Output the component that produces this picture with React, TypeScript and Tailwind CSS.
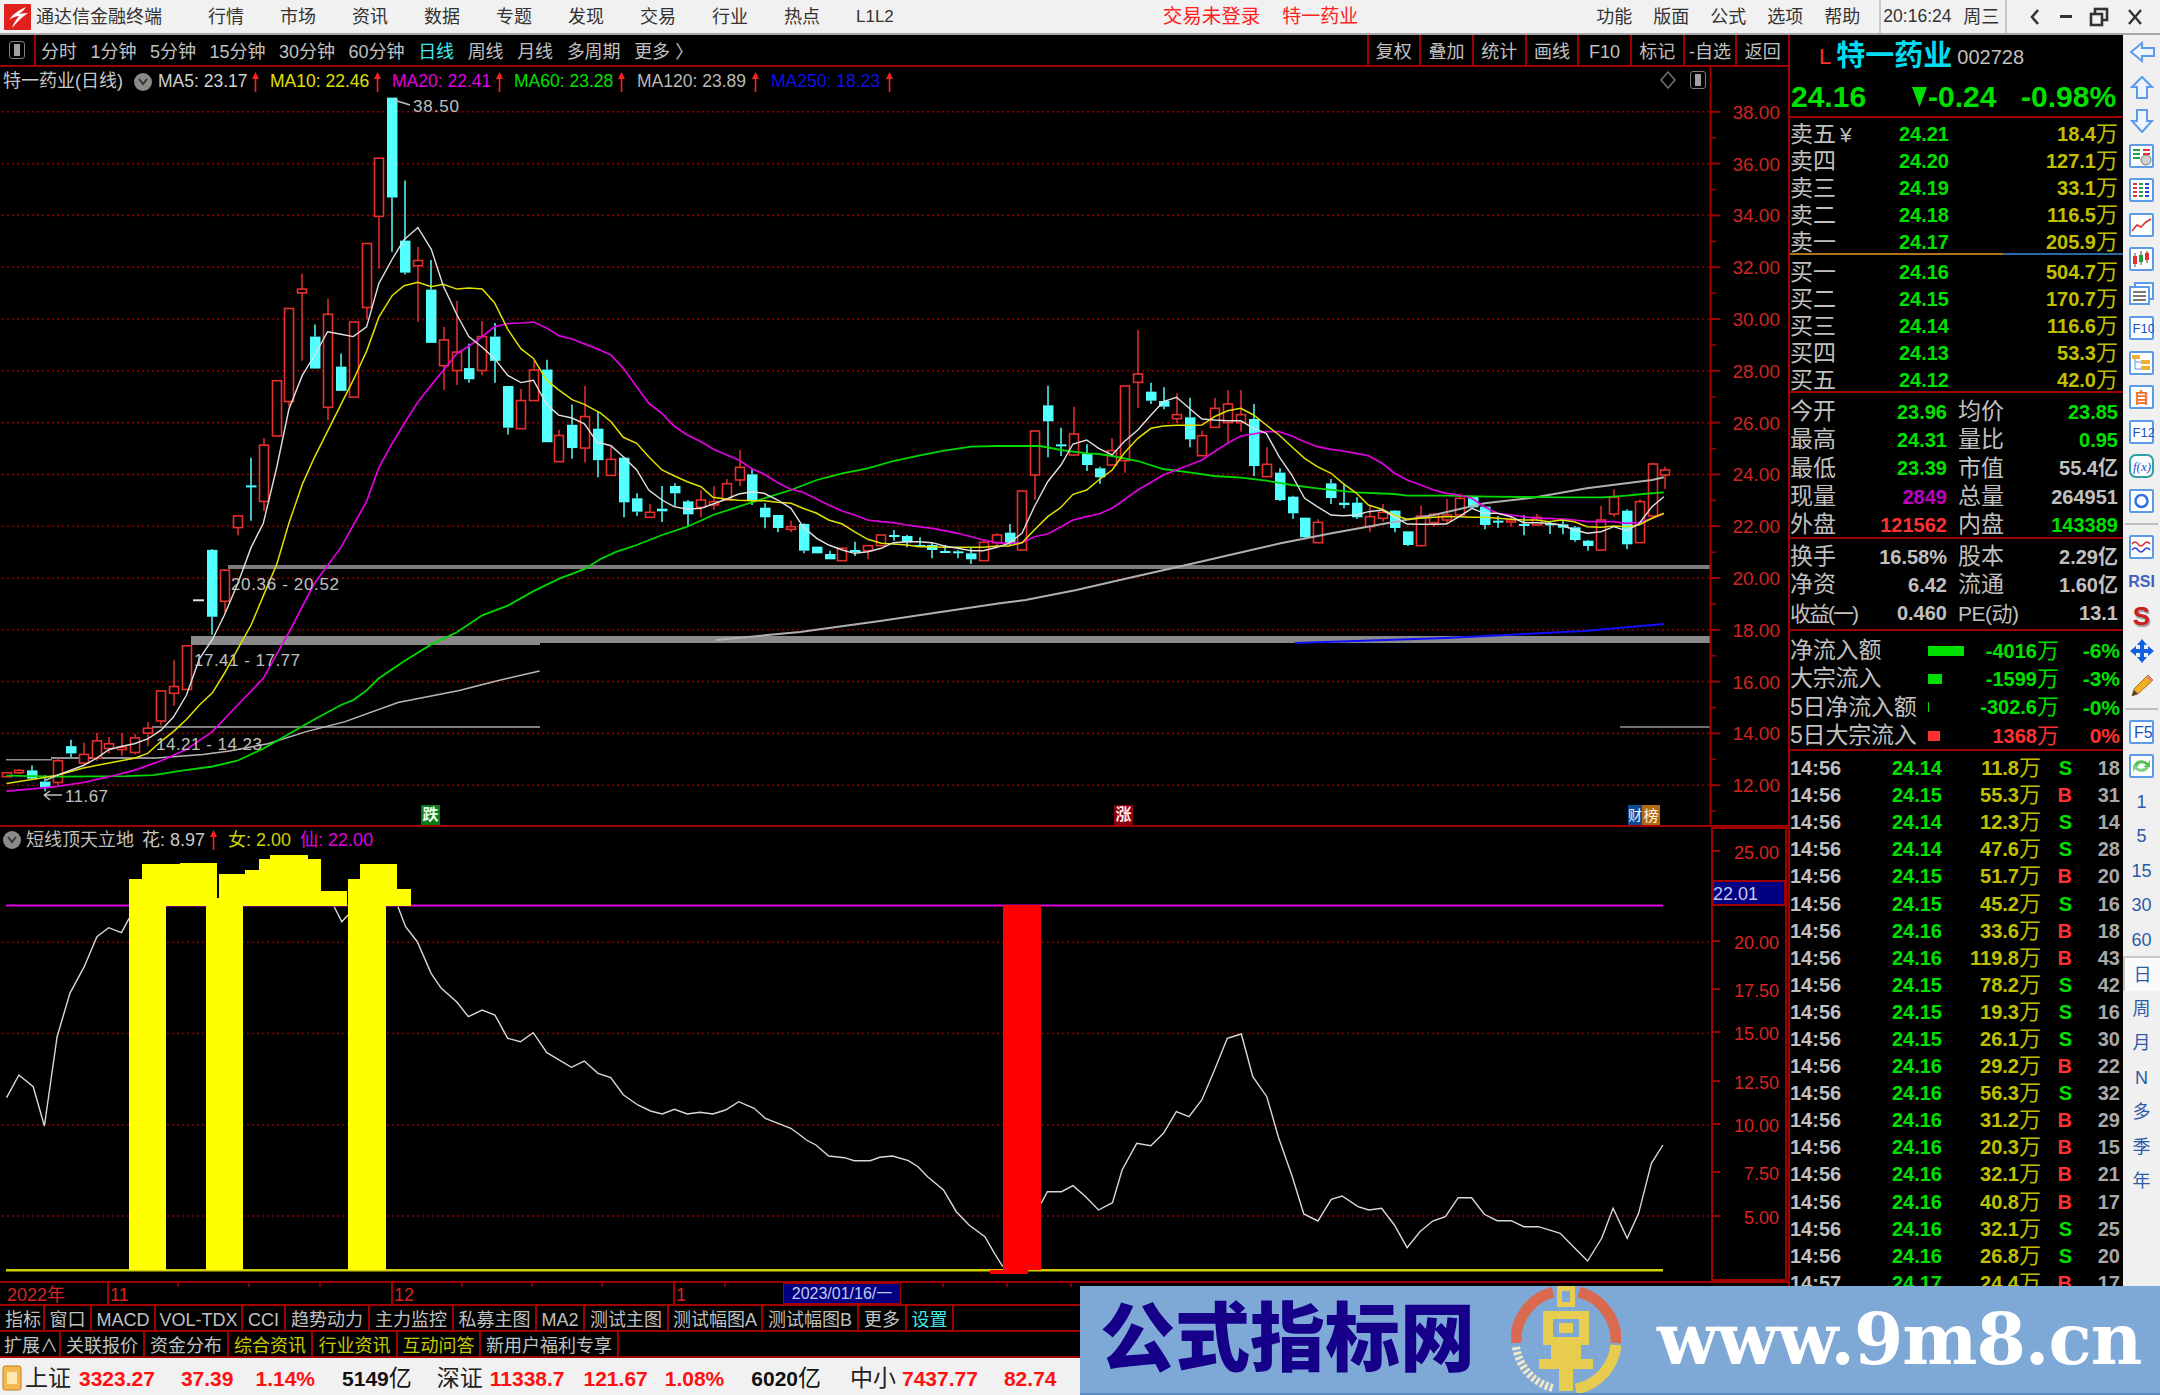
import React from "react";

const z7 = (a: number[]) => { const r: number[][] = []; for (let i = 0; i < a.length; i += 2) r.push([a[i] / 2.613, 70 + a[i + 1] * 0.4847]); return r; };
const z8 = (a: number[]) => { const r: number[][] = []; for (let i = 0; i < a.length; i += 2) r.push([600 + a[i] / 3, 300 + a[i + 1] / 3]); return r; };
const z9 = (a: number[]) => { const r: number[][] = []; for (let i = 0; i < a.length; i += 2) r.push([1000 + a[i] / 1.96, 300 + a[i + 1] / 3]); return r; };
const z10 = (a: number[]) => { const r: number[][] = []; for (let i = 0; i < a.length; i += 2) r.push([a[i] / 1.96, 820 + a[i + 1] / 3]); return r; };
const z11 = (a: number[]) => { const r: number[][] = []; for (let i = 0; i < a.length; i += 2) r.push([800 + a[i] / 1.568, 820 + a[i + 1] / 3]); return r; };
const P = (r: number[][]) => r.map((p) => p[0].toFixed(1) + "," + p[1].toFixed(1)).join(" ");

// r = red (hollow), c = cyan (solid): [wickTop, bodyTop, bodyBottom, wickBottom]
const candA: [string, number, number, number, number][] = [
  ["r",1448,1450,1458,1458],["r",1442,1445,1450,1452],["c",1435,1445,1462,1465],["c",1455,1468,1480,1488],["r",1420,1425,1470,1478],
  ["c",1382,1395,1410,1418],["r",1388,1412,1430,1435],["r",1368,1384,1420,1425],["r",1376,1390,1400,1410],["r",1368,1397,1402,1415],
  ["r",1370,1378,1408,1412],["r",1345,1358,1368,1395],["r",1281,1281,1343,1352],["r",1218,1272,1286,1312],["r",1188,1188,1278,1278],
  ["w",1092,1092,1093,1093],["c",988,990,1128,1165],["r",1030,1032,1096,1118],["r",918,920,944,960],["c",800,857,858,930],
  ["r",760,774,890,910],["r",640,641,755,755],["r",491,492,684,694],["r",420,452,460,600],["c",525,550,616,616],
  ["r",472,504,696,722],["c",585,612,662,662],["r",520,520,675,675],["r",358,358,490,515],["r",182,182,302,410],
  ["c",57,57,263,375],["c",228,352,418,422],["r",365,393,404,520],["c",392,453,563,563],["r",530,557,610,660],
  ["r",476,582,620,650],["c",565,615,638,645],["r",518,550,620,630],["c",522,550,600,645],["c",652,652,738,752],
  ["r",658,682,740,740],["r",600,619,682,682],["c",598,618,768,768],["r",742,754,808,808],["c",690,732,780,802],
  ["r",652,715,780,810],["c",705,740,805,840],
];
const candB: [string, number, number, number, number][] = [
  ["r",440,478,526,526],["c",470,473,607,652],["c",580,595,635,648],["r",612,637,652,652],["c",558,626,634,666],
  ["c",550,558,580,618],["c",600,604,643,680],["r",570,600,622,652],["r",558,605,615,630],["r",537,551,600,603],
  ["r",450,502,540,558],["c",508,523,600,615],["c",610,623,652,685],["c",645,645,684,697],["r",662,680,688,697],
  ["c",670,672,752,760],["c",740,740,760,760],["c",752,762,778,778],["r",742,745,782,782],["c",725,750,752,768],
  ["r",735,737,752,778],["r",705,705,737,737],["c",690,705,707,722],["c",705,708,727,742],["c",712,735,738,740],
  ["c",728,735,750,775],["c",735,753,755,757],["c",750,754,756,775],["c",742,760,778,792],["r",720,727,782,782],
  ["r",700,705,728,745],["c",672,698,730,735],["r",573,573,750,750],["r",393,393,525,600],["c",257,316,364,472],
  ["c",383,433,436,468],["r",320,402,465,467],["c",433,462,495,513],["c",500,505,532,552],
  ["r",415,452,495,495],["r",258,258,482,518],["r",90,222,247,325],["c",248,275,302,312],["c",262,303,320,328],
  ["r",280,344,356,370],["c",293,352,418,442],["r",392,407,467,467],["r",293,325,382,382],["r",270,312,368,428],
  ["r",270,344,368,395],["c",312,357,498,528],["r",442,493,530,530],["c",505,518,600,603],["c",587,590,640,657],
  ["c",653,653,712,718],["r",658,667,728,728],["c",537,550,594,612],["c",555,608,615,625],["c",592,608,652,657],
  ["r",615,650,680,697],["r",612,637,655,665],["c",630,632,684,697],["c",694,694,735,738],["r",617,648,737,737],
  ["r",640,643,668,680],["r",598,645,660,672],["r",582,595,645,650],["c",590,590,622,625],["c",620,620,675,688],
  ["c",648,662,665,683],["r",650,660,665,680],["c",645,672,675,706],["r",642,652,675,677],["c",665,670,675,702],
  ["c",660,673,683,703],["c",678,682,720,725],["c",720,722,738,752],["r",618,660,750,752],["r",568,592,642,650],
  ["c",628,632,733,748],["r",598,605,728,728],["r",488,492,648,655],["r",500,510,525,567],
];
const candles = [
  ...candA.map((c) => [c[0], 70 + c[1] * 0.4847, 70 + c[2] * 0.4847, 70 + c[3] * 0.4847, 70 + c[4] * 0.4847] as [string, number, number, number, number]),
  ...candB.map((c) => [c[0], 300 + c[1] / 3, 300 + c[2] / 3, 300 + c[3] / 3, 300 + c[4] / 3] as [string, number, number, number, number]),
];

const ma5 = [
  ...z7([120,1465,150,1455,218,1435,252,1420,285,1402,319,1395,351,1390,386,1380,421,1362,453,1335,487,1290,521,1215,555,1175,586,1125,621,1060,656,985,688,935,723,820,755,700,790,630,821,590,856,540,891,545,923,550,958,530,990,440,1025,390,1056,350,1092,325,1127,370,1158,445,1194,505,1225,550,1260,572,1292,595,1327,630,1361,645,1394,640,1428,690,1460,712,1495,718,1527,730,1562,770]),
  ...z8([0,428,33,437,70,470,110,510,146,570,186,600,222,620,262,628,303,625,339,612,380,597,416,582,457,575,492,580,533,600,573,625,609,680,650,715,686,735,727,750,763,760,803,755,844,745,880,728,920,725,956,725,997,728,1033,738,1073,745,1114,752,1150,752,1190,742,1226,730,1266,700,1303,620,1343,545,1383,495,1419,432,1460,420,1496,445]),
  ...z9([220,465,243,425,270,390,296,345,320,305,346,292,371,325,396,357,420,360,446,362,472,362,497,385,522,400,547,470,572,525,597,595,622,620,649,645,672,647,699,645,722,635,749,630,772,650,798,672,825,673,850,673,875,672,900,650,925,625,949,640,975,640,1002,650,1026,668,1052,668,1076,670,1100,675,1126,690,1151,700,1178,695,1203,680,1228,692,1252,672,1278,620,1301,590]),
];
const ma10 = [
  ...z7([17,1472,50,1468,100,1462,150,1455,218,1440,285,1430,351,1420,386,1410,421,1385,453,1365,487,1340,521,1310,555,1285,586,1245,621,1195,656,1145,688,1085,723,1020,755,935,790,855,821,800,856,745,891,690,923,640,958,580,990,510,1025,465,1056,445,1092,438,1127,447,1158,442,1194,452,1225,450,1260,452,1292,480,1327,535,1361,575,1394,595,1428,640,1460,660,1495,680,1527,690,1562,705]),
  ...z8([0,338,33,365,70,412,110,430,146,470,186,510,222,527,262,545,303,560,339,592,380,598,416,601,457,602,492,602,533,607,573,610,609,625,650,640,686,660,727,672,763,695,803,718,844,730,880,732,920,735,956,740,997,740,1033,742,1073,742,1114,742,1150,742,1190,738,1226,738,1266,728,1303,690,1343,650,1383,622,1419,583,1460,570,1496,540]),
  ...z9([220,510,243,460,270,415,296,385,320,378,346,376,371,376,396,375,420,350,446,332,472,325,497,345,522,375,547,405,572,440,597,475,622,500,649,520,672,550,699,580,722,615,749,628,772,645,798,658,825,655,850,652,875,650,900,650,925,652,949,652,975,655,1002,658,1026,660,1052,660,1076,665,1100,660,1126,665,1151,680,1178,682,1203,678,1228,680,1252,675,1278,655,1301,640]),
];
const ma20 = [
  ...z7([17,1488,100,1482,150,1478,218,1470,285,1458,351,1445,421,1425,487,1402,555,1365,621,1310,688,1255,755,1160,821,1060,891,985,958,890,990,820,1025,770,1056,730,1092,685,1127,650,1158,620,1194,585,1225,570,1260,550,1292,530,1327,523,1361,522,1394,520,1428,532,1460,548,1495,555,1527,565]),
  ...z8([0,150,33,165,70,205,110,260,146,310,186,340,222,378,262,405,303,425,339,447,380,465,416,480,457,507,492,522,533,548,573,568,609,577,650,597,686,615,727,633,763,645,803,660,844,665,880,668,920,675,956,680,997,685,1033,692,1073,700,1114,710,1150,720,1190,728,1226,730,1266,728,1303,710,1343,702,1383,680,1419,660,1460,650,1496,642]),
  ...z9([220,625,270,570,320,525,371,495,396,480,420,455,446,430,472,408,497,402,522,395,547,395,572,408,597,425,622,440,649,448,672,453,699,460,722,467,749,490,772,518,798,540,825,555,850,570,875,580,900,585,925,595,949,620,975,640,1002,645,1026,650,1052,655,1076,655,1100,657,1126,660,1151,665,1178,665,1203,665,1228,670,1252,668,1278,655,1301,642]),
];
const ma60 = [
  ...z7([17,1456,150,1458,330,1457,400,1455,480,1445,555,1437,620,1425,688,1400,755,1370,821,1340,891,1310,923,1300,958,1280,990,1255,1056,1220,1127,1185,1194,1160,1260,1125,1327,1105,1394,1075,1460,1050,1527,1030]),
  ...z8([0,778,50,755,110,735,186,705,262,680,339,645,416,620,492,595,573,570,650,540,727,520,803,505,880,483,956,467,1033,452,1114,440,1190,438,1320,438,1383,450,1460,460]),
  ...z9([193,462,220,468,270,483,320,507,371,517,420,528,472,533,522,542,572,555,622,565,699,577,772,582,798,587,875,587,960,590,1100,592,1180,592,1228,587,1260,582,1301,577]),
];
const ma120a = z7([400,1420,530,1412,600,1405,700,1390,800,1365,900,1345,1040,1305,1200,1280,1300,1260,1410,1240]);
const ma120b = [[716,640],[800,632],[880,621],...z9([0,910,50,900,150,870,250,835,350,800,450,765,550,730,650,700,750,672,850,645,950,610,1050,592,1150,565,1278,540,1301,532])];

const kdjLeft = z10([13,833,37,765,65,800,87,918,112,650,137,520,165,440,190,350,213,323,238,338,253,295]);
const kdjMidA = z10([655,260,670,305,682,285]);
const kdjMidB = [
  ...z10([780,260,795,320,818,365,845,460,865,505,895,545,918,590,945,570,970,585,995,655,1020,665,1045,638,1072,698,1120,742,1145,723,1172,760,1197,773,1222,825,1250,855,1275,873,1298,882,1322,868,1347,882,1372,877,1397,882,1422,870,1448,845,1478,865,1500,895,1525,910,1550,925,1568,945]),
  ...z11([10,960,25,975,45,1008,70,1013,85,1022,110,1022,125,1012,145,1008,170,1022,185,1040,200,1070,225,1110,245,1175,265,1215,290,1250,305,1300,318,1340]),
];
const kdjRight = z11([378,1150,388,1115,410,1115,428,1097,448,1130,468,1170,490,1148,505,1050,528,970,550,977,570,940,590,875,610,890,630,840,650,750,670,655,692,642,710,770,732,830,750,950,772,1070,790,1182,812,1203,833,1138,850,1128,875,1160,892,1170,912,1165,932,1215,952,1283,972,1235,992,1203,1012,1190,1032,1133,1053,1133,1073,1183,1093,1202,1115,1202,1135,1220,1158,1220,1192,1240,1210,1275,1235,1323,1257,1255,1275,1165,1297,1255,1315,1180,1335,1030,1353,975]);

const priceY = (p: number) => 578 - (p - 20) * 25.9;
const axisPrices = [38, 36, 34, 32, 30, 28, 26, 24, 22, 20, 18, 16, 14, 12];

const yellowTops = [
  [129, 142, 879], [142, 180, 864], [180, 217, 863], [219, 245, 874], [245, 259, 870], [259, 270, 859], [270, 308, 855], [308, 321, 859], [321, 347, 891],
  [348, 360, 879], [360, 397, 864], [397, 411, 889],
];

function UpArr({ color = "#ff2020" }: { color?: string }) {
  return (
    <svg width="9" height="22" viewBox="0 0 9 22" className="ml-[4px] shrink-0">
      <path d="M4.5 6V21" stroke={color} strokeWidth="1.6" />
      <path d="M4.5 1L8 8H1Z" fill={color} />
    </svg>
  );
}

function MainChart() {
  return (
    <div className="relative h-[758px] w-full">
      <svg width="1788" height="758" viewBox="0 67 1788 758" className="block">
        {axisPrices.map((p) => (
          <line key={p} x1="2" x2="1710" y1={priceY(p)} y2={priceY(p)} stroke="#8a0000" strokeWidth="1.6" strokeDasharray="2 3" />
        ))}
        <rect x="228" y="565" width="1482" height="4" fill="#7d7d7d" />
        <rect x="191" y="636" width="349" height="9" fill="#8a8a8a" />
        <rect x="540" y="636" width="1170" height="7" fill="#8a8a8a" />
        <rect x="152" y="726" width="388" height="2" fill="#808080" />
        <rect x="1620" y="726" width="90" height="2" fill="#707070" />
        <rect x="51" y="757" width="103" height="2" fill="#909090" />
        <rect x="6" y="759" width="46" height="1.5" fill="#909090" />
        {candles.map((c, i) => {
          const x = Math.round(6.5 + 12.86 * i);
          const [k, wt, bt, bb, wb] = c;
          if (k === "w") return <rect key={i} x={x - 6} y={wt} width="11" height="2" fill="#e0e0e0" />;
          const color = k === "r" ? "#e6302c" : "#54ffff";
          const h = Math.max(bb - bt, 2);
          return (
            <g key={i}>
              {wt < bt && <line x1={x} x2={x} y1={wt} y2={bt} stroke={color} strokeWidth="1.5" />}
              {wb > bb && <line x1={x} x2={x} y1={bb} y2={wb} stroke={color} strokeWidth="1.5" />}
              {k === "r" ? (
                <rect x={x - 4.5} y={bt} width="9" height={h} fill="#000" stroke={color} strokeWidth="1.6" />
              ) : (
                <rect x={x - 5} y={bt} width="10.5" height={h} fill={color} />
              )}
            </g>
          );
        })}
        <polyline points={P(ma120a)} fill="none" stroke="#b8b8b8" strokeWidth="1.5" />
        <polyline points={P(ma120b)} fill="none" stroke="#b0b0b0" strokeWidth="2" />
        <polyline points="1295,643 1446,638 1584,631 1664,624" fill="none" stroke="#1010ff" strokeWidth="2" />
        <polyline points={P(ma60)} fill="none" stroke="#00d800" strokeWidth="1.8" />
        <polyline points={P(ma20)} fill="none" stroke="#e000e0" strokeWidth="1.7" />
        <polyline points={P(ma10)} fill="none" stroke="#e0e000" strokeWidth="1.5" />
        <polyline points={P(ma5)} fill="none" stroke="#e0e0e0" strokeWidth="1.4" />
        <g fill="#c0c0c0" fontSize="17" fontFamily="'Liberation Sans',sans-serif">
          <text x="413" y="112" textLength="46">38.50</text>
          <text x="65" y="802" textLength="43">11.67</text>
          <text x="231" y="590" textLength="108">20.36 - 20.52</text>
          <text x="194" y="666" textLength="106">17.41 - 17.77</text>
          <text x="156" y="750" textLength="106">14.21 - 14.23</text>
        </g>
        <path d="M394 100L410 105" stroke="#c0c0c0" strokeWidth="1.5" fill="none" />
        <path d="M62 795H44M44 795L50 791M44 795L50 800" stroke="#c0c0c0" strokeWidth="1.5" fill="none" />
        <line x1="1710.5" x2="1710.5" y1="67" y2="825" stroke="#a00000" strokeWidth="2" />
        {axisPrices.map((p) => (
          <g key={p}>
            <line x1="1710" x2="1720" y1={priceY(p)} y2={priceY(p)} stroke="#a00000" strokeWidth="2" />
            <line x1="1710" x2="1716" y1={priceY(p) + 26} y2={priceY(p) + 26} stroke="#a00000" strokeWidth="1.5" />
            <text x="1780" y={priceY(p) + 7} textAnchor="end" fill="#d02420" fontSize="19" fontFamily="'Liberation Sans',sans-serif">{p}.00</text>
          </g>
        ))}
      </svg>
      <div className="absolute left-[3px] top-[2px] flex h-[25px] items-center text-[17.5px] whitespace-nowrap">
        <span className="w-[126px] text-[18px] text-[#c8c8c8]">特一药业(日线)</span>
        <span className="ml-[5px] flex h-[18px] w-[18px] items-center justify-center rounded-full bg-[#8a8a8a] text-[#333]">
          <svg width="10" height="8" viewBox="0 0 10 8"><path d="M1 1L5 6L9 1" stroke="#333" strokeWidth="2" fill="none" /></svg>
        </span>
        <span className="ml-[6px] w-[89px] text-[#d0d0d0]">MA5: 23.17</span><UpArr />
        <span className="ml-[10px] w-[99px] text-[#e0e000]">MA10: 22.46</span><UpArr />
        <span className="ml-[10px] w-[99px] text-[#e000e0]">MA20: 22.41</span><UpArr />
        <span className="ml-[10px] w-[99px] text-[#00e000]">MA60: 23.28</span><UpArr />
        <span className="ml-[11px] w-[110px] text-[#b8b8b8]">MA120: 23.89</span><UpArr />
        <span className="ml-[11px] w-[110px] text-[#1010e0]">MA250: 18.23</span><UpArr />
      </div>
      <div className="absolute left-[1660px] top-[4px] flex items-center gap-[14px]">
        <svg width="16" height="18" viewBox="0 0 16 18"><path d="M8 1L15 9L8 17L1 9Z" fill="none" stroke="#707070" strokeWidth="1.5" /></svg>
        <span className="flex h-[18px] w-[16px] items-center justify-center rounded-[3px] border border-[#808080]"><span className="h-[12px] w-[6px] bg-[#a0a0a0]" /></span>
      </div>
      <span className="absolute left-[421px] top-[738px] flex h-[20px] w-[19px] items-center justify-center bg-[#067a1c] text-[16px] font-bold leading-none text-[#e8ffe8]">跌</span>
      <span className="absolute left-[1114px] top-[738px] flex h-[20px] w-[19px] items-center justify-center bg-[#8a0010] text-[16px] font-bold leading-none text-[#ffe8e8]">涨</span>
      <span className="absolute left-[1628px] top-[738px] flex h-[20px] w-[14px] items-center justify-center bg-[#104a90] text-[14px] leading-none text-[#e8f0ff]">财</span>
      <span className="absolute left-[1642px] top-[738px] flex h-[20px] w-[18px] items-center justify-center bg-[#b06a10] text-[15px] leading-none text-[#fff4e0]">榜</span>
    </div>
  );
}

function IndicatorChart() {
  const y = (v: number) => 1216 - (v - 5) * 18.25;
  const labels: [string, number][] = [["25.00", 852], ["20.00", 942], ["17.50", 990], ["15.00", 1033], ["12.50", 1082], ["10.00", 1125], ["7.50", 1173], ["5.00", 1217]];
  return (
    <div className="relative h-[454px] w-full">
      <svg width="1788" height="454" viewBox="0 827 1788 454" className="block">
        {[20, 15, 10, 5].map((v) => (
          <line key={v} x1="2" x2="1712" y1={y(v)} y2={y(v)} stroke="#8a0000" strokeWidth="1.6" strokeDasharray="2 3" />
        ))}
        <polyline points={P(kdjLeft)} fill="none" stroke="#d8d8d8" strokeWidth="1.4" />
        <polyline points={P(kdjMidA)} fill="none" stroke="#d8d8d8" strokeWidth="1.4" />
        <polyline points={P(kdjMidB)} fill="none" stroke="#d8d8d8" strokeWidth="1.4" />
        <polyline points={P(kdjRight)} fill="none" stroke="#d8d8d8" strokeWidth="1.4" />
        <rect x="6" y="904.5" width="1657" height="2" fill="#e000e0" />
        <rect x="6" y="1269" width="1657" height="2.5" fill="#d0d000" />
        <rect x="129" y="905" width="37" height="365" fill="#ffff00" />
        <rect x="206" y="905" width="37" height="365" fill="#ffff00" />
        <rect x="348" y="905" width="38" height="365" fill="#ffff00" />
        {yellowTops.map(([a, b, t]) => (
          <rect key={a} x={a} y={t} width={b - a} height={906 - t} fill="#ffff00" />
        ))}
        <rect x="217" y="898" width="2" height="8" fill="#ffff00" />
        <rect x="1003" y="905" width="38" height="365" fill="#ff0000" />
        <rect x="990" y="1270" width="38" height="4" fill="#ff0000" />
        <path d="M1712 828H1786V1280H1712Z" fill="none" stroke="#a00000" strokeWidth="2" />
        <rect x="1713" y="881" width="72" height="24" fill="#000080" stroke="#a00000" strokeWidth="2" />
        <text x="1713" y="900" fill="#c8c8f0" fontSize="18" fontFamily="'Liberation Sans',sans-serif">22.01</text>
        {labels.map(([s, yy]) => (
          <g key={s}>
            <line x1="1712" x2="1720" y1={yy - 1} y2={yy - 1} stroke="#a00000" strokeWidth="2" />
            <text x="1779" y={yy + 7} textAnchor="end" fill="#d82420" fontSize="18" fontFamily="'Liberation Sans',sans-serif">{s}</text>
          </g>
        ))}
      </svg>
      <div className="absolute left-[3px] top-[1px] flex h-[24px] items-center whitespace-nowrap text-[18px]">
        <span className="flex h-[18px] w-[18px] items-center justify-center rounded-full bg-[#8a8a8a]">
          <svg width="10" height="8" viewBox="0 0 10 8"><path d="M1 1L5 6L9 1" stroke="#333" strokeWidth="2" fill="none" /></svg>
        </span>
        <span className="ml-[5px] text-[#c0c0c0]">短线顶天立地</span>
        <span className="ml-[8px] text-[#c8c8c8]">花: 8.97</span><UpArr />
        <span className="ml-[10px] text-[#d0d000]">女: 2.00</span>
        <span className="ml-[9px] text-[#e000e0]">仙: 22.00</span>
      </div>
    </div>
  );
}

function TimeAxis() {
  const ticks = [178, 249, 320, 462, 532, 602, 725, 943, 1007, 1071];
  return (
    <div className="relative flex h-[23px] items-center border-b-2 border-[#a00000] text-[18px] leading-[25px] text-[#d82420]">
      <span className="h-full w-[107px] pl-[7px]">2022年</span>
      <span className="h-full w-[284px] border-l-2 border-[#a00000] pl-[1px]">11</span>
      <span className="h-full w-[282px] border-l-2 border-[#a00000] pl-[1px]">12</span>
      <span className="h-full w-[110px] border-l-2 border-[#a00000] pl-[1px]">1</span>
      <span className="flex h-full w-[118px] items-center justify-center border border-[#a00000] bg-[#000080] text-[16px] text-[#c8c8f0]">2023/01/16/一</span>
      <svg width="1100" height="4" className="absolute left-0 top-0">
        {ticks.map((t) => (<line key={t} x1={t} x2={t} y1="0" y2="4" stroke="#a00000" strokeWidth="1.5" />))}
      </svg>
    </div>
  );
}

const tabs1: [string, number, string?][] = [["指标", 42], ["窗口", 47], ["MACD", 64], ["VOL-TDX", 87], ["CCI", 43], ["趋势动力", 84], ["主力监控", 84], ["私募主图", 83], ["MA2", 48], ["测试主图", 84], ["测试幅图A", 94], ["测试幅图B", 96], ["更多", 48], ["设置", 47, "#40e8e8"]];
const tabs2: [string, number, string?][] = [["扩展∧", 58], ["关联报价", 84], ["资金分布", 84], ["综合资讯", 84, "#c8c800"], ["行业资讯", 85, "#c8c800"], ["互动问答", 83, "#c8c800"], ["新用户福利专享", 138]];

function TabRow({ items, h }: { items: [string, number, string?][]; h: string }) {
  return (
    <div className={"flex pl-[3px] border-b-2 border-[#a00000] text-[#c0c0c0] " + h}>
      {items.map(([t, w, c]) => (
        <span key={t} style={{ width: w, color: c }} className="flex shrink-0 items-center justify-center overflow-hidden whitespace-nowrap border-r-2 border-[#a00000] pt-[3px] text-[18px] leading-none">{t}</span>
      ))}
    </div>
  );
}

function Quote({ l, p, v, cny }: { l: string; p: string; v: string; cny?: boolean }) {
  return (
    <div className="flex h-[27.1px] items-center pr-[5px] pt-[5px]">
      <span className="w-[46px] text-[23px] leading-none text-[#c0c0c0]">{l}</span>
      <span className="w-[26px] pl-[4px] text-[21px] leading-none text-[#c0c0c0]">{cny ? "¥" : ""}</span>
      <span className="w-[87px] text-right text-[20px] font-bold leading-none text-[#00e000]">{p}</span>
      <span className="flex flex-1 items-center justify-end text-[20px] font-bold leading-none text-[#c0c000]">{v}<span className="text-[22px] font-normal">万</span></span>
    </div>
  );
}

function Stat({ a, b, ac = "#00e000", c, d, dc = "#00e000", tight }: { a: string; b: string; ac?: string; c: string; d: string; dc?: string; tight?: boolean }) {
  return (
    <div className="flex h-[28.3px] items-center pr-[5px] pt-[5px]">
      <span className={"w-[60px] whitespace-nowrap leading-none text-[#c0c0c0] " + (tight ? "text-[21px] [letter-spacing:-2px]" : "text-[23px]")}>{a}</span>
      <span style={{ color: ac }} className="w-[97px] text-right text-[20px] font-bold leading-none">{b}</span>
      <span className={"ml-[11px] whitespace-nowrap leading-none text-[#c0c0c0] " + (tight ? "text-[21px] [letter-spacing:-0.5px]" : "text-[23px]")}>{c}</span>
      <span style={{ color: dc }} className="flex-1 whitespace-nowrap text-right text-[20px] font-bold leading-none">{d}</span>
    </div>
  );
}

function Flow({ l, bar, v, p, red }: { l: string; bar: React.ReactNode; v: string; p: string; red?: boolean }) {
  const col = red ? "text-[#ff3030]" : "text-[#00e000]";
  return (
    <div className="flex h-[28.3px] items-center pr-[3px] pt-[5px]">
      <span className="w-[138px] whitespace-nowrap text-[23px] leading-none text-[#c0c0c0] [letter-spacing:-0.2px]">{l}</span>
      <span className="flex w-[131px] items-center justify-between">
        {bar}
        <span className={"text-[20px] font-bold leading-none " + col}>{v}<span className="text-[22px] font-normal">万</span></span>
      </span>
      <span className={"flex-1 text-right text-[21px] font-bold leading-none " + col}>{p}</span>
    </div>
  );
}

const ticks: [string, string, string, string, string][] = [
  ["14:56","24.14","11.8","S","18"],["14:56","24.15","55.3","B","31"],["14:56","24.14","12.3","S","14"],["14:56","24.14","47.6","S","28"],
  ["14:56","24.15","51.7","B","20"],["14:56","24.15","45.2","S","16"],["14:56","24.16","33.6","B","18"],["14:56","24.16","119.8","B","43"],
  ["14:56","24.15","78.2","S","42"],["14:56","24.15","19.3","S","16"],["14:56","24.15","26.1","S","30"],["14:56","24.16","29.2","B","22"],
  ["14:56","24.16","56.3","S","32"],["14:56","24.16","31.2","B","29"],["14:56","24.16","20.3","B","15"],["14:56","24.16","32.1","B","21"],
  ["14:56","24.16","40.8","B","17"],["14:56","24.16","32.1","S","25"],["14:56","24.16","26.8","S","20"],["14:57","24.17","24.4","B","17"],
];

function RightPanel() {
  return (
    <div className="flex h-[1323px] w-[335px] shrink-0 flex-col overflow-hidden border-l-2 border-[#a00000]">
      <div className="flex h-[43px] shrink-0 items-center whitespace-nowrap">
        <span className="ml-[29px] text-[22px] leading-none text-[#ff3030]">L</span>
        <span className="ml-[5px] text-[29px] font-bold leading-none text-[#00dcf0]">特一药业</span>
        <span className="ml-[5px] text-[20px] leading-none text-[#c0c0c0]">002728</span>
      </div>
      <div className="flex h-[40px] shrink-0 items-center whitespace-nowrap border-b-2 border-[#a00000] pl-[1px] text-[30px] font-bold leading-none text-[#00e000]">
        <span className="w-[121px]">24.16</span>
        <span className="flex w-[109px] items-center"><svg width="15" height="22" viewBox="0 0 15 22" className="mr-[1px]"><path d="M0 1H15L7.5 21Z" fill="#00e000" /></svg>-0.24</span>
        <span>-0.98%</span>
      </div>
      <div className="h-[135px] shrink-0">
        <Quote l="卖五" cny p="24.21" v="18.4" />
        <Quote l="卖四" p="24.20" v="127.1" />
        <Quote l="卖三" p="24.19" v="33.1" />
        <Quote l="卖二" p="24.18" v="116.5" />
        <Quote l="卖一" p="24.17" v="205.9" />
      </div>
      <div className="flex h-[2px] shrink-0"><span className="h-full w-[213px] bg-[#b07420]" /><span className="h-full flex-1 bg-[#2a68a8]" /></div>
      <div className="h-[138px] shrink-0 border-b-2 border-[#a00000] pt-[1px]">
        <Quote l="买一" p="24.16" v="504.7" />
        <Quote l="买二" p="24.15" v="170.7" />
        <Quote l="买三" p="24.14" v="116.6" />
        <Quote l="买四" p="24.13" v="53.3" />
        <Quote l="买五" p="24.12" v="42.0" />
      </div>
      <div className="h-[146px] shrink-0 border-b-2 border-[#a00000] pt-[2px]">
        <Stat a="今开" b="23.96" c="均价" d="23.85" />
        <Stat a="最高" b="24.31" c="量比" d="0.95" />
        <Stat a="最低" b="23.39" c="市值" d="55.4亿" dc="#c0c0c0" />
        <Stat a="现量" b="2849" ac="#c000c0" c="总量" d="264951" dc="#c0c0c0" />
        <Stat a="外盘" b="121562" ac="#ff3030" c="内盘" d="143389" />
      </div>
      <div className="h-[92px] shrink-0 border-b-2 border-[#a00000] pt-[1px]">
        <Stat a="换手" b="16.58%" ac="#c0c0c0" c="股本" d="2.29亿" dc="#c0c0c0" />
        <Stat a="净资" b="6.42" ac="#c0c0c0" c="流通" d="1.60亿" dc="#c0c0c0" />
        <Stat tight a="收益(一)" b="0.460" ac="#c0c0c0" c="PE(动)" d="13.1" dc="#c0c0c0" />
      </div>
      <div className="h-[120px] shrink-0 border-b-2 border-[#a00000] pt-[3px]">
        <Flow l="净流入额" bar={<span className="h-[10px] w-[36px] bg-[#00e000]" />} v="-4016" p="-6%" />
        <Flow l="大宗流入" bar={<span className="h-[10px] w-[14px] bg-[#00e000]" />} v="-1599" p="-3%" />
        <Flow l="5日净流入额" bar={<span className="h-[10px] w-[1px] bg-[#00e000]" />} v="-302.6" p="-0%" />
        <Flow l="5日大宗流入" bar={<span className="h-[10px] w-[12px] bg-[#ff3030]" />} v="1368" p="0%" red />
      </div>
      <div className="pt-[1px]">
        {ticks.map((t, i) => (
          <div key={i} className="flex h-[27.1px] items-center pt-[5px] text-[20px] font-bold leading-none">
            <span className="w-[52px] text-[#c0c0c0]">{t[0]}</span>
            <span className="w-[100px] text-right text-[#00e000]">{t[1]}</span>
            <span className="flex w-[99px] items-center justify-end text-[#c0c000]">{t[2]}<span className="text-[22px] font-normal">万</span></span>
            <span className={"w-[31px] text-right " + (t[3] === "S" ? "text-[#00e000]" : "text-[#ff3030]")}>{t[3]}</span>
            <span className="w-[48px] text-right text-[#a8a8a8]">{t[4]}</span>
          </div>
        ))}
      </div>
    </div>
  );
}

const B = "#5b9be8";
function Box({ children }: { children?: React.ReactNode }) {
  return (
    <svg width="25" height="24" viewBox="0 0 25 24">
      <rect x="1" y="1" width="23" height="22" rx="1" fill="#fff" stroke={B} strokeWidth="2" />
      {children}
    </svg>
  );
}
const rowsOf = (c: string[]) => c.map((col, k) => [6, 10, 14, 18].map((yy) => <line key={k + "-" + yy} x1={4 + k * 6} x2={8 + k * 6} y1={yy} y2={yy} stroke={col} strokeWidth="2" />));

const sideIcons: React.ReactNode[] = [
  <svg width="26" height="22" viewBox="0 0 26 22"><path d="M2 11L13 2V7H25V15H13V20Z" fill="#eef5ff" stroke={B} strokeWidth="2" /></svg>,
  <svg width="24" height="24" viewBox="0 0 24 24"><path d="M12 2L22 12H17V23H7V12H2Z" fill="#eef5ff" stroke={B} strokeWidth="2" /></svg>,
  <svg width="24" height="24" viewBox="0 0 24 24"><path d="M12 23L22 12H17V1H7V12H2Z" fill="#eef5ff" stroke={B} strokeWidth="2" /></svg>,
  <Box>{[6, 10, 14].map((y) => <line key={y} x1="4" x2="11" y1={y} y2={y} stroke="#20a040" strokeWidth="2" />)}{[6, 10].map((y) => <line key={y} x1="14" x2="21" y1={y} y2={y} stroke="#e03030" strokeWidth="2" />)}<circle cx="17" cy="16" r="5" fill="#d0d0d0" stroke="#777" /></Box>,
  <Box>{rowsOf(["#e03030", "#20a040", "#2040e0"])}</Box>,
  <Box><path d="M3 18L8 12L12 14L17 9L22 6" fill="none" stroke="#e03030" strokeWidth="1.6" /></Box>,
  <Box><path d="M6 6V20M12 4V18M18 4V16" stroke="#444" /><rect x="4" y="9" width="4" height="8" fill="#e03030" /><rect x="10" y="8" width="4" height="7" fill="#20a040" /><rect x="16" y="6" width="4" height="7" fill="#e03030" /></Box>,
  <svg width="25" height="24" viewBox="0 0 25 24"><rect x="6" y="1" width="18" height="16" fill="#fff" stroke={B} strokeWidth="2" /><rect x="1" y="5" width="19" height="17" fill="#fff" stroke={B} strokeWidth="2" /><path d="M4 10H17M4 14H17M4 18H17" stroke="#777" strokeWidth="2" /></svg>,
  <Box><text x="3.5" y="17" fontSize="13" fontFamily="'Liberation Sans'" fill="#2050c0">F10</text></Box>,
  <Box><path d="M6 7V18H12M6 11H12" stroke={B} fill="none" /><rect x="3" y="4" width="8" height="4" fill="#f0b030" /><rect x="12" y="9" width="9" height="4" fill="#f0b030" /><rect x="12" y="15" width="9" height="4" fill="#f0b030" /></Box>,
  <Box><text x="5" y="18" fontSize="15" fontWeight="700" fill="#f07030">自</text></Box>,
  <Box><text x="3.5" y="17" fontSize="13" fontFamily="'Liberation Sans'" fill="#2050c0">F12</text></Box>,
  <svg width="25" height="24" viewBox="0 0 25 24"><rect x="1" y="1" width="23" height="22" rx="6" fill="#fff" stroke="#30a0a0" strokeWidth="2" /><text x="4" y="17" fontSize="13" fontStyle="italic" fontFamily="'Liberation Serif'" fill="#2050c0">f(x)</text></svg>,
  <Box><circle cx="12.5" cy="12" r="6" fill="none" stroke="#3070e0" strokeWidth="2.5" /></Box>,
  null,
  <Box><path d="M3 9Q6 5 9 9T15 9T21 9" fill="none" stroke="#e03030" strokeWidth="1.5" /><path d="M3 15Q6 11 9 15T15 15T21 15" fill="none" stroke="#3040e0" strokeWidth="1.5" /></Box>,
  <span className="text-[16px] font-bold leading-none text-[#4060c0]">RSI</span>,
  <span className="text-[26px] font-bold leading-none text-[#c82020] [text-shadow:1px_2px_1px_#999]">S</span>,
  <svg width="26" height="26" viewBox="0 0 26 26"><path d="M13 1L18 7H15V11H19V8L25 13L19 18V15H15V19H18L13 25L8 19H11V15H7V18L1 13L7 8V11H11V7H8Z" fill="#1060e0" /></svg>,
  <svg width="26" height="26" viewBox="0 0 26 26"><path d="M3 24L5 17L19 3L24 8L10 21Z" fill="#f0b020" stroke="#a87010" /><path d="M3 24L5 18L9 22Z" fill="#444" /><path d="M19 3L24 8L22 10L17 5Z" fill="#e08080" /></svg>,
  null,
  <Box><text x="5" y="18" fontSize="16" fontFamily="'Liberation Sans'" fill="#2050c0">F5</text></Box>,
  <Box><path d="M5 11A8 7 0 0 1 19 9L21 6V13H14L17 11A5 4 0 0 0 8 12Z" fill="#50c050" /><path d="M20 13A8 7 0 0 1 6 15L4 18V11H11L8 13A5 4 0 0 0 17 12Z" fill="#80d080" /></Box>,
];
const sideText = ["1", "5", "15", "30", "60", "日", "周", "月", "N", "多", "季", "年"];

function Sidebar() {
  return (
    <div className="flex h-[1323px] w-[37px] shrink-0 flex-col items-center bg-[#f0f0f0]">
      {sideIcons.map((ic, i) =>
        ic === null ? (
          <div key={i} className="flex h-[12px] w-full shrink-0 items-center px-[2px]"><span className="h-[2px] w-full bg-[#c0c0c0]" /></div>
        ) : (
          <div key={i} className="flex h-[34.5px] w-full shrink-0 items-center justify-center">{ic}</div>
        )
      )}
      {sideText.map((t) => (
        <div key={t} className={"flex h-[34.5px] w-full shrink-0 items-center justify-center pt-[2px] text-[18px] leading-none text-[#2c5aa8] " + (t === "日" ? "border-l-2 border-t-2 border-[#c8c8c8] bg-[#fafafa]" : "")}>{t}</div>
      ))}
    </div>
  );
}

function Watermark() {
  return (
    <div className="absolute left-[1080px] top-[1286px] flex h-[109px] w-[1080px] items-center overflow-hidden border-b-2 border-[#5f8cc0] bg-[#7ea9d7]">
      <span className="ml-[20px] w-[378px] whitespace-nowrap text-[75px] font-black leading-none text-[#16008a]">公式指标网</span>
      <svg width="110" height="109" viewBox="0 0 110 109" className="ml-[33px] shrink-0">
        <path d="M5 58A50 50 0 0 1 42 7" fill="none" stroke="#d96a50" strokeWidth="11" />
        <path d="M68 7A50 50 0 0 1 105 58" fill="none" stroke="#d96a50" strokeWidth="11" />
        <path d="M105 60A50 50 0 0 1 65 104" fill="none" stroke="#e8cc50" strokeWidth="11" />
        <path d="M5 62A50 50 0 0 0 42 103" fill="none" stroke="#f0e8c8" strokeWidth="8" strokeDasharray="3 2" />
        <path d="M46 1H64V22H46Z" fill="#e8cc50" />
        <path d="M51 6H59V17H51Z" fill="#7ea9d7" />
        <path d="M32 26H78V60H70V74H82V84H62V106H48V84H28V74H40V60H32ZM42 34V52H68V34Z" fill="#e8cc50" />
        <path d="M48 38V48H62V38Z" fill="#e8cc50" />
      </svg>
      <span className="ml-[36px] whitespace-nowrap text-[71px] font-bold leading-none tracking-[-1px] text-white [font-family:'DejaVu_Serif',serif]">www.9m8.cn</span>
    </div>
  );
}

const menus = ["行情", "市场", "资讯", "数据", "专题", "发现", "交易", "行业", "热点"];
const periods: [string, string?][] = [["分时"], ["1分钟"], ["5分钟"], ["15分钟"], ["30分钟"], ["60分钟"], ["日线", "#40e8f0"], ["周线"], ["月线"], ["多周期"], ["更多 〉"]];

export default function App() {
  return (
    <div className="relative h-[1395px] w-[2160px] overflow-hidden bg-black [font-family:'Liberation_Sans','Noto_Sans_CJK_SC',sans-serif]">
      <div className="flex h-[35px] items-center whitespace-nowrap border-b-2 border-[#a8a8a8] bg-[#f1f1f1] text-[18px] leading-none text-[#333]">
        <svg width="27" height="26" viewBox="0 0 27 26" className="ml-[4px] shrink-0">
          <rect width="27" height="26" rx="1" fill="#e0201c" />
          <path d="M22 3C15 6 9 10 5 16C9 13 12 12 15 12C12 16 9 20 8 24C13 18 18 13 24 9C20 9 17 10 15 10C18 8 20 6 22 3Z" fill="#fff" />
        </svg>
        <span className="ml-[5px] w-[172px]">通达信金融终端</span>
        <div className="flex gap-[36px]">
          {menus.map((m) => <span key={m}>{m}</span>)}
          <span className="text-[17px]">L1L2</span>
        </div>
        <span className="ml-[269px] text-[19.5px] text-[#ff2020]">交易未登录</span>
        <span className="ml-[22px] text-[19px] text-[#ff2020]">特一药业</span>
        <div className="ml-[238px] flex gap-[21px]">
          {["功能", "版面", "公式", "选项", "帮助"].map((m) => <span key={m}>{m}</span>)}
        </div>
        <span className="ml-[19px] flex h-full items-center border-x-2 border-[#c8c8c8] px-[2px]">
          <span className="w-[80px] text-[17.5px]">20:16:24</span>
          <span className="w-[40px]">周三</span>
        </span>
        <svg width="16" height="20" viewBox="0 0 16 20" className="ml-[20px]"><path d="M11 3L5 10L11 17" fill="none" stroke="#333" strokeWidth="2.6" /></svg>
        <span className="ml-[17px] h-[3px] w-[12px] bg-[#333]" />
        <svg width="20" height="20" viewBox="0 0 20 20" className="ml-[17px]"><rect x="6" y="2" width="12" height="11" fill="none" stroke="#333" strokeWidth="2.6" /><rect x="2" y="7" width="11" height="11" fill="#f1f1f1" stroke="#333" strokeWidth="2.6" /></svg>
        <svg width="18" height="20" viewBox="0 0 18 20" className="ml-[17px]"><path d="M3 3L15 17M15 3L3 17" stroke="#333" strokeWidth="2.4" /></svg>
      </div>
      <div className="flex">
        <div className="flex h-[1323px] w-[1788px] shrink-0 flex-col">
          <div className="flex h-[32px] shrink-0 items-center border-b-2 border-[#a00000] text-[18px] leading-none text-[#c0c0c0]">
            <span className="flex h-full w-[36px] shrink-0 items-center justify-center border-r-2 border-[#a00000]">
              <span className="flex h-[18px] w-[16px] items-center justify-center rounded-[3px] border border-[#808080]"><span className="h-[12px] w-[6px] bg-[#a0a0a0]" /></span>
            </span>
            <div className="ml-[5px] flex gap-[13.5px] whitespace-nowrap pt-[3px]">
              {periods.map(([t, c]) => <span key={t} style={{ color: c }}>{t}</span>)}
            </div>
            <div className="ml-auto flex h-full">
              {["复权", "叠加", "统计", "画线", "F10", "标记", "-自选", "返回"].map((t) => (
                <span key={t} className="flex h-full w-[52.7px] items-center justify-center whitespace-nowrap border-l-2 border-[#a00000] pt-[3px]">{t}</span>
              ))}
            </div>
          </div>
          <MainChart />
          <div className="h-[2px] shrink-0 bg-[#a00000]" />
          <IndicatorChart />
          <div className="h-[2px] shrink-0 bg-[#a00000]" />
          <TimeAxis />
          <TabRow items={tabs1} h="h-[26px]" />
          <TabRow items={tabs2} h="h-[26px]" />
        </div>
        <RightPanel />
        <Sidebar />
      </div>
      <div className="flex h-[37px] items-center whitespace-nowrap bg-[#f1f1f1] pt-[3px] text-[21px] font-bold leading-none text-[#ff1010]">
        <svg width="20" height="28" viewBox="0 0 20 28" className="ml-[2px]"><rect x="1" y="2" width="18" height="24" rx="2" fill="#f4b850" stroke="#c08020" /><rect x="5" y="8" width="10" height="12" fill="#ffe8b0" /></svg>
        <span className="ml-[3px] text-[23px] font-normal text-[#222]">上证</span>
        <span className="ml-[8px]">3323.27</span>
        <span className="ml-[26px]">37.39</span>
        <span className="ml-[22px]">1.14%</span>
        <span className="ml-[27px] text-[#111]">5149<span className="text-[23px] font-normal">亿</span></span>
        <span className="ml-[25px] text-[23px] font-normal text-[#222]">深证</span>
        <span className="ml-[7px]">11338.7</span>
        <span className="ml-[19px]">121.67</span>
        <span className="ml-[17px]">1.08%</span>
        <span className="ml-[27px] text-[#111]">6020<span className="text-[23px] font-normal">亿</span></span>
        <span className="ml-[29px] text-[23px] font-normal text-[#222]">中小</span>
        <span className="ml-[6px]">7437.77</span>
        <span className="ml-[26px]">82.74</span>
      </div>
      <Watermark />
    </div>
  );
}
